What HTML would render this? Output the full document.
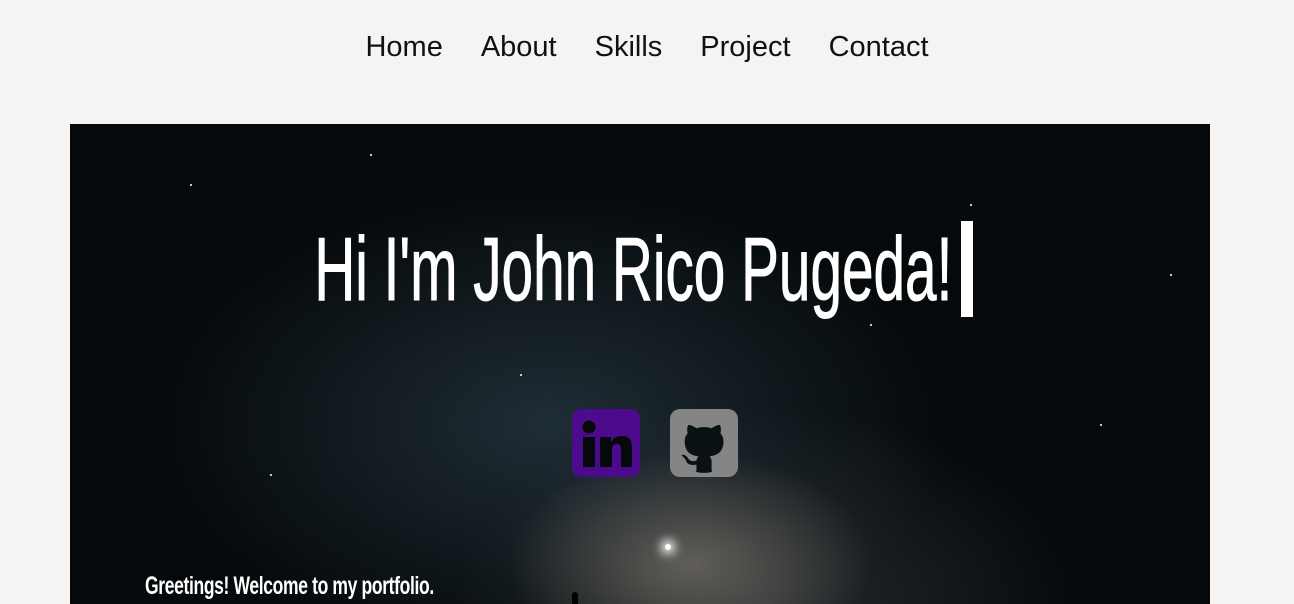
<!DOCTYPE html>
<html><head><style>
body{margin:0;width:1294px;height:604px;background:#f5f4f3;overflow:hidden;font-family:"Liberation Sans",sans-serif;position:relative}
nav{position:absolute;top:31px;left:0;width:1294px;text-align:center;font-size:29px;color:#111}
nav span{margin:0 19px}
.hero{position:absolute;left:70px;top:124px;width:1140px;height:480px;overflow:hidden;
background:
radial-gradient(ellipse 260px 160px at 620px 440px,rgba(150,140,125,.55),transparent 70%),
radial-gradient(ellipse 420px 260px at 700px 480px,rgba(60,65,70,.6),transparent 75%),
radial-gradient(ellipse 500px 300px at 480px 300px,#1f2d35,transparent 80%),
#05090b;}
.star{position:absolute;width:2px;height:2px;background:#fff;border-radius:50%}
h1{position:absolute;left:0;width:1140px;top:95px;margin:0;text-align:center;color:#fff;font-weight:normal;font-size:90px;white-space:nowrap}
h1 span{display:inline-block;transform:translateX(-7px) scaleX(.63);transform-origin:center;-webkit-text-stroke:1px #fff}
.cur{position:absolute;left:891px;top:97px;width:12px;height:96px;background:#fff}
.g{position:absolute;left:75px;top:448px;color:#fff;font-weight:bold;font-size:25px;transform:scaleX(.70);transform-origin:left;letter-spacing:-.5px;white-space:nowrap}
</style></head><body>
<nav><span>Home</span><span>About</span><span>Skills</span><span>Project</span><span>Contact</span></nav>
<div class="hero">
<div class="star" style="left:595px;top:420px;width:6px;height:6px;box-shadow:0 0 10px 4px #fff"></div>
<div class="star" style="left:120px;top:60px"></div><div class="star" style="left:300px;top:30px"></div>
<div class="star" style="left:900px;top:80px"></div><div class="star" style="left:1030px;top:300px"></div>
<div class="star" style="left:200px;top:350px"></div><div class="star" style="left:800px;top:200px"></div>
<div class="star" style="left:450px;top:250px"></div><div class="star" style="left:1100px;top:150px"></div>
<h1><span>Hi I'm John Rico Pugeda!</span></h1>
<div class="cur"></div>
<svg style="position:absolute;left:502px;top:285px" width="68" height="68" viewBox="0 0 68 68">
<rect width="68" height="68" rx="9" fill="#4b0b8c"/>
<circle cx="17" cy="18" r="6.5" fill="#05090b"/>
<rect x="11" y="28" width="12" height="30" fill="#05090b"/>
<path d="M28 28h11v5c2-4 6-6 11-6 8 0 10 5 10 12v19H49V41c0-4-1-6-4-6s-5 2-5 6v17H28z" fill="#05090b"/>
</svg>
<svg style="position:absolute;left:600px;top:285px" width="68" height="68" viewBox="0 0 68 68">
<rect width="68" height="68" rx="10" fill="#858585"/>
<clipPath id="c"><rect width="68" height="68" rx="10"/></clipPath>
<g clip-path="url(#c)"><g transform="translate(3.6,3.5) scale(3.8)">
<circle cx="8" cy="8" r="7.9" fill="#0a1114"/>
<path fill="#858585" d="M8 0C3.58 0 0 3.58 0 8c0 3.54 2.29 6.530 5.470 7.590.4.07.55-.17.55-.38 0-.19-.01-.82-.01-1.49-2.01.37-2.53-.49-2.69-.94-.09-.23-.48-.94-.82-1.130-.28-.15-.68-.52-.01-.53.63-.01 1.08.58 1.23.82.72 1.21 1.87.87 2.33.66.07-.52.28-.87.51-1.070-1.78-.2-3.640-.89-3.640-3.95 0-.87.31-1.59.82-2.150-.08-.2-.36-1.02.08-2.12 0 0 .67-.21 2.2.82.64-.18 1.32-.27 2-.27.68 0 1.36.09 2 .27 1.53-1.04 2.2-.82 2.2-.82.44 1.1.16 1.92.08 2.12.51.56.82 1.27.82 2.15 0 3.07-1.87 3.75-3.65 3.95.29.25.54.73.54 1.48 0 1.07-.01 1.93-.01 2.2 0 .21.15.46.55.38A8.013 8.013 0 0016 8c0-4.42-3.58-8-8-8z"/>
</g></g>
</svg>
<div class="g">Greetings! Welcome to my portfolio.</div>
<div style="position:absolute;left:502px;top:468px;width:6px;height:12px;background:#000;border-radius:3px 3px 0 0"></div>
</div>
</body></html>
